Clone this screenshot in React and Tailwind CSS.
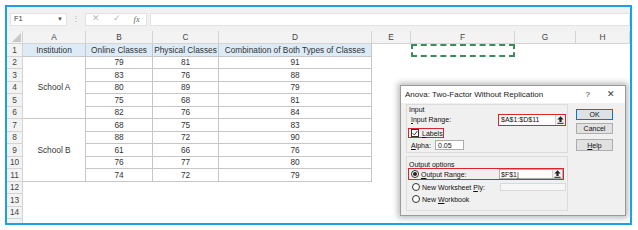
import React from "react";

const data = [
  [79, 81, 91],
  [83, 76, 88],
  [80, 89, 79],
  [75, 68, 81],
  [82, 76, 84],
  [68, 75, 83],
  [88, 72, 90],
  [61, 66, 76],
  [76, 77, 80],
  [74, 72, 79],
];

const hdr =
  "flex items-center justify-center border-r border-b border-[#d4d4d4] bg-[#f3f3f3] text-[#444]";
const tcell =
  "flex items-center justify-center border-r border-b border-[#c6c6c6] text-[#333]";
const blank = "bg-white";

function UpBtn() {
  return (
    <div className="flex h-full w-[10px] items-center justify-center border-l border-[#d0d0d0] bg-[#f0f0f0]">
      <svg width="7" height="8" viewBox="0 0 7 8">
        <path d="M3.5 0.3 L6.6 3.6 H4.6 V6 H2.4 V3.6 H0.4 Z" fill="#222" />
        <rect x="0.4" y="6.8" width="6.2" height="1" fill="#222" />
      </svg>
    </div>
  );
}

function Radio({ on }) {
  return (
    <div className="flex h-[8px] w-[8px] items-center justify-center rounded-full border border-[#333] bg-white">
      {on && <div className="h-[4px] w-[4px] rounded-full bg-[#222]" />}
    </div>
  );
}

function Btn({ children, def }) {
  return (
    <div
      className={
        "flex w-[37px] items-center justify-center border bg-[#e1e1e1] text-[#111] " +
        (def ? "border-[#0078d7]" : "border-[#adadad]")
      }
    >
      {children}
    </div>
  );
}

export default function App() {
  const cells = [];
  cells.push(
    <div key="corner" className="relative border-r border-b border-[#d4d4d4] bg-[#f3f3f3]">
      <svg className="absolute right-[1px] bottom-[1px]" width="9" height="9" viewBox="0 0 9 9">
        <path d="M9 0 V9 H0 Z" fill="#c8c8c8" />
      </svg>
    </div>
  );
  ["A", "B", "C", "D", "E", "F", "G", "H"].forEach((l) =>
    cells.push(
      <div key={"h" + l} className={hdr}>
        {l}
      </div>
    )
  );
  // row 1
  cells.push(<div key="r1" className={hdr}>1</div>);
  ["Institution", "Online Classes", "Physical Classes", "Combination of Both Types of Classes"].forEach((t, i) =>
    cells.push(
      <div key={"t1" + i} className={tcell + " bg-[#ddebf7] whitespace-nowrap"}>
        {t}
      </div>
    )
  );
  cells.push(<div key="e1" className={blank} />);
  cells.push(
    <div key="f1" className="border-2 border-dashed border-[#3a8c5c] bg-white" />
  );
  cells.push(<div key="g1" className={blank} />);
  cells.push(<div key="hh1" className={blank} />);

  data.forEach((d, i) => {
    const r = i + 2;
    cells.push(
      <div key={"r" + r} className={hdr}>
        {r}
      </div>
    );
    if (r === 2 || r === 7) {
      cells.push(
        <div key={"m" + r} className={tcell + " row-span-5 bg-white"}>
          {r === 2 ? "School A" : "School B"}
        </div>
      );
    }
    d.forEach((v, j) =>
      cells.push(
        <div key={"c" + r + j} className={tcell + " bg-white"}>
          {v}
        </div>
      )
    );
    for (let k = 0; k < 4; k++) cells.push(<div key={"b" + r + k} className={blank} />);
  });
  for (let r = 12; r <= 15; r++) {
    cells.push(
      <div key={"r" + r} className={hdr}>
        {r <= 14 ? r : ""}
      </div>
    );
    for (let k = 0; k < 8; k++) cells.push(<div key={"x" + r + k} className={blank} />);
  }

  return (
    <div className="h-[230px] w-[638px] overflow-hidden bg-white pt-[5px] pl-[5px] font-['Liberation_Sans',Arial,sans-serif]">
      <div className="relative h-[220px] w-[627px] overflow-hidden border-2 border-[#17a3e6] bg-white">
        {/* toolbar */}
        <div className="flex h-[24px] items-center bg-[#f1f1f1] pl-[3px] text-[7.5px] text-[#444]">
          <div className="flex h-[13px] w-[57px] items-center justify-between border border-[#e2e2e2] bg-white px-[3px]">
            <span>F1</span>
            <span className="text-[6px] text-[#555]">▼</span>
          </div>
          <div className="flex w-[18px] justify-center text-[8px] text-[#b0b0b0]">⋮</div>
          <div className="flex h-[13px] w-[62px] items-center justify-around border border-[#e2e2e2] bg-white text-[#b8b8b8]">
            <span className="text-[9px]">✕</span>
            <span className="text-[9px]">✓</span>
            <span className="font-['Liberation_Serif',serif] text-[8.5px] italic text-[#666]">fx</span>
          </div>
          <div className="ml-[3px] h-[13px] flex-1 border border-[#e2e2e2] bg-white" />
        </div>
        {/* sheet */}
        <div className="grid grid-cols-[16px_63px_67px_66px_153px_39px_104px_61px_54px] grid-rows-[13px] auto-rows-[12.5px] text-[8.3px] leading-none">
          {cells}
        </div>

        {/* dialog */}
        <div className="absolute left-[393px] top-[78px] flex h-[131px] w-[226px] flex-col border border-[#9a9a9a] bg-[#f0f0f0] text-[7px] leading-none text-[#111] shadow-[0_0_6px_2px_rgba(0,0,0,0.28)]">
          <div className="flex h-[17px] items-center bg-white pl-[4px] pr-[10px]">
            <span className="flex-1 text-[8px] text-[#222]">Anova: Two-Factor Without Replication</span>
            <span className="mr-[17px] text-[8px] text-[#333]">?</span>
            <span className="text-[9px] text-[#333]">✕</span>
          </div>
          <div className="flex pl-[5px] pt-[1px]">
            <div className="flex w-[162px] flex-col">
              {/* Input group */}
              <div className="flex h-[49px] flex-col border border-[#dcdcdc] pl-[1px]">
                <div className="h-[8px] pl-[1px] pt-[1px]">Input</div>
                <div className="flex h-[13px] items-center pl-[3px]">
                  <span className="w-[87px]">
                    <span className="underline">I</span>nput Range:
                  </span>
                  <div className="flex h-[12px] w-[68px] border-[1.5px] border-[#d9262c] bg-white">
                    <div className="flex flex-1 items-center pl-[2px]">$A$1:$D$11</div>
                    <UpBtn />
                  </div>
                </div>
                <div className="mt-[2px] flex h-[10px] w-[36px] items-center gap-[3px] border-[1.5px] border-[#d9262c] pl-[2px]">
                  <div className="flex h-[8px] w-[8px] items-center justify-center border border-[#333] bg-white">
                    <svg width="6" height="6" viewBox="0 0 6 6">
                      <path d="M0.6 3.2 L2.3 4.9 L5.4 1" stroke="#222" strokeWidth="0.9" fill="none" />
                    </svg>
                  </div>
                  <span>
                    <span className="underline">L</span>abels
                  </span>
                </div>
                <div className="mt-[2px] flex h-[10px] items-center pl-[3px]">
                  <span className="w-[24px]">
                    <span className="underline">A</span>lpha:
                  </span>
                  <div className="flex h-[10px] w-[29px] items-center border border-[#adadad] bg-white pl-[2px]">0.05</div>
                </div>
              </div>
              {/* Output group */}
              <div className="mt-[3px] flex h-[55px] flex-col border border-[#dcdcdc] pl-[1px]">
                <div className="h-[11px] pl-[1px] pt-[4px]">Output options</div>
                <div className="flex h-[12px] w-[156px] items-center border-[1.5px] border-[#d9262c] pl-[2px]">
                  <Radio on />
                  <span className="ml-[2px] w-[78px]">
                    <span className="underline">O</span>utput Range:
                  </span>
                  <div className="flex h-[10px] flex-1 border border-[#adadad] bg-white">
                    <div className="flex flex-1 items-center pl-[1px]">$F$1|</div>
                    <UpBtn />
                  </div>
                </div>
                <div className="mt-[2px] flex h-[10px] items-center pl-[4px]">
                  <Radio />
                  <span className="ml-[2px] w-[78px]">
                    New Worksheet <span className="underline">P</span>ly:
                  </span>
                  <div className="h-[8px] w-[66px] border border-[#d8d8d8] bg-[#f7f7f7]" />
                </div>
                <div className="mt-[2px] flex h-[10px] items-center pl-[4px]">
                  <Radio />
                  <span className="ml-[2px]">
                    New <span className="underline">W</span>orkbook
                  </span>
                </div>
              </div>
            </div>
            <div className="ml-[8px] flex flex-col pt-[5px]">
              <div className="flex h-[11px]">
                <Btn def>OK</Btn>
              </div>
              <div className="mt-[3px] flex h-[11px]">
                <Btn>Cancel</Btn>
              </div>
              <div className="mt-[5px] flex h-[12px]">
                <Btn>
                  <span>
                    <span className="underline">H</span>elp
                  </span>
                </Btn>
              </div>
            </div>
          </div>
        </div>
      </div>
    </div>
  );
}
